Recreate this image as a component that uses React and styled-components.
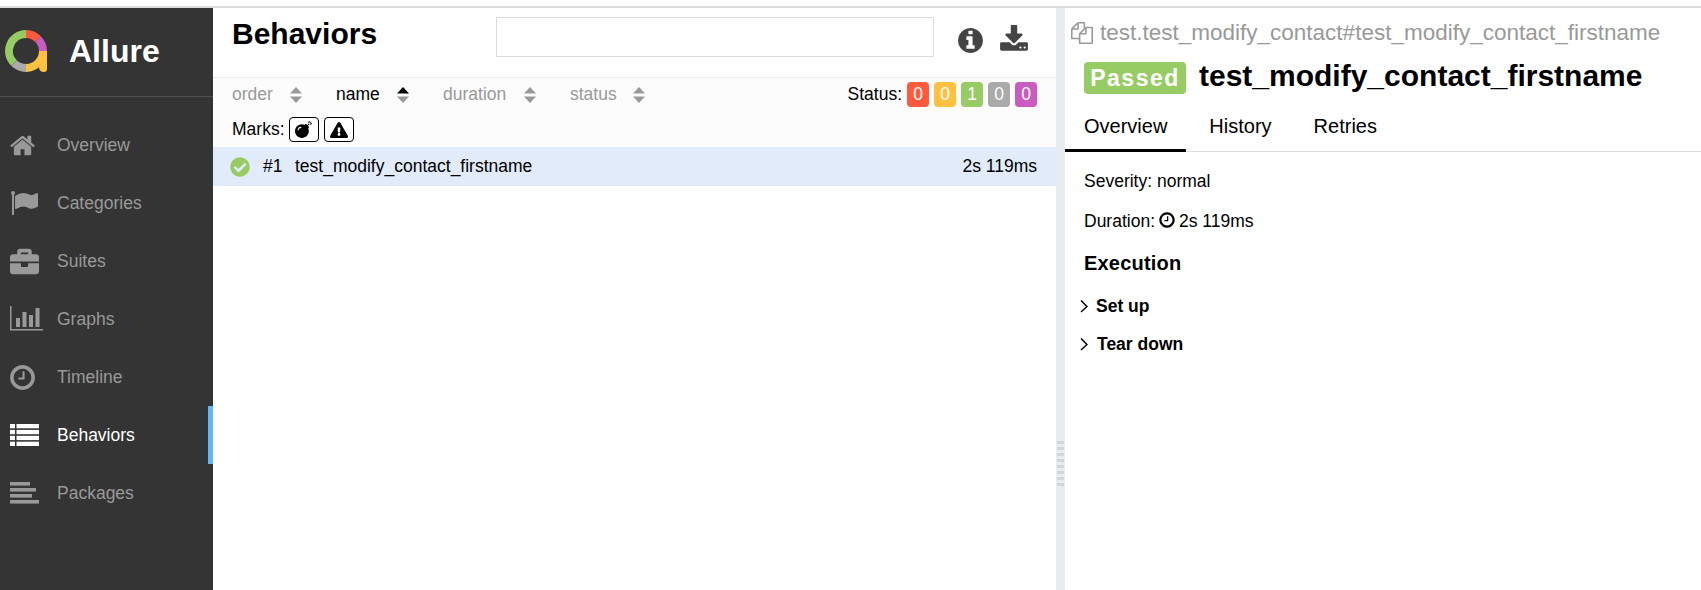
import React from 'react';
import styled, { createGlobalStyle } from 'styled-components';
import { FaBriefcase, FaBomb, FaExclamationTriangle, FaCheckCircle } from 'react-icons/fa';

const Global = createGlobalStyle`
  html, body { margin: 0; padding: 0; height: 100%; background: #fff; overflow: hidden; }
  body { font-family: "Liberation Sans", Arial, sans-serif; font-size: 17.5px; color: #000; }
  #root { height: 100%; }
`;

const Page = styled.div`
  width: 1701px; height: 590px; display: flex; flex-direction: column; overflow: hidden;
  padding-top: 6px; box-sizing: border-box;
`;
const TopLine = styled.div`height: 2px; background: #dcdcdc; flex: none;`;
const Body = styled.div`flex: 1; display: flex; min-height: 0;`;

const Side = styled.aside`width: 213px; flex: none; background: #343434; display: flex; flex-direction: column;`;
const Brand = styled.div`
  height: 89px; box-sizing: border-box; border-bottom: 1px solid #505050; display: flex; align-items: center;
  padding: 0 0 0 5px; gap: 20px; margin-bottom: 19px;
`;
const BrandName = styled.span`color: #fff; font-weight: 700; font-size: 32px; margin-bottom: 2px;`;
const NavItem = styled.div`
  height: 58px; display: flex; align-items: center; padding-left: 10px; box-sizing: border-box;
  color: ${p => (p.$active ? '#fff' : '#999')};
  border-right: ${p => (p.$active ? '5px solid #64b5f6' : '0')};
`;
const NavIcon = styled.span`width: 47px; flex: none; display: flex; align-items: center; svg { display: block; }`;
const Glyph = styled.svg`display: block; flex: none; fill: ${p => p.$c}; margin-left: ${p => p.$ml || 0}px;`;

const List = styled.main`width: 843px; flex: none; display: flex; flex-direction: column;`;
const ListHead = styled.header`
  height: 70px; flex: none; box-sizing: border-box; display: flex; align-items: flex-start;
  border-bottom: 1px solid #eee; padding-left: 19px;
`;
const Title = styled.h2`margin: 8px 0 0; font-size: 30px; line-height: 36px; font-weight: 700; width: 264px;`;
const Search = styled.div`width: 438px; height: 40px; margin-top: 9px; box-sizing: border-box; border: 1px solid #ddd; background: #fff;`;
const HeadIcon = styled.span`display: flex; margin-top: ${p => p.$mt}px; margin-left: ${p => p.$ml}px;`;

const Toolbar = styled.div`background: #fcfcfc; height: 69px; flex: none; box-sizing: border-box; padding: 4px 19px 0 19px;`;
const SortRow = styled.div`display: flex; align-items: center; height: 25px;`;
const SortItem = styled.span`
  display: flex; align-items: center; width: ${p => p.$w}px; flex: none;
  color: ${p => (p.$active ? '#000' : '#999')};
`;
const SortLabel = styled.span`width: ${p => p.$w}px; flex: none;`;
const StatusWrap = styled.div`margin-left: auto; display: flex; align-items: center; gap: 5px;`;
const Count = styled.span`
  width: 22px; height: 25px; border-radius: 4px; background: ${p => p.$c}; color: #fff; display: flex;
  align-items: center; justify-content: center; font-size: 17.5px;
`;
const MarksRow = styled.div`display: flex; align-items: center; gap: 5px; margin-top: 10px; height: 25px;`;
const MarksLabel = styled.span`margin-right: -1px;`;
const Mark = styled.span`
  width: 30px; height: 25px; box-sizing: border-box; border: 1px solid #000; border-radius: 4px;
  display: flex; align-items: center; justify-content: center; background: #fff;
`;
const Row = styled.div`
  height: 39px; flex: none; background: #e2ebfa; display: flex; align-items: center; padding: 0 19px 0 17px; box-sizing: border-box;
`;
const RowCheck = styled.span`display: flex; width: 33px; color: #97cc64; flex: none;`;
const RowOrder = styled.span`width: 32px; flex: none;`;
const RowTime = styled.span`margin-left: auto;`;

const Split = styled.div`width: 9px; flex: none; background: #e9edf1; display: flex; flex-direction: column; align-items: center; gap: 3px; padding-top: 433px; box-sizing: border-box;`;
const Grip = styled.i`display: block; width: 7px; height: 3px; background: #d3d7db;`;

const Detail = styled.section`flex: 1; min-width: 0; display: flex; flex-direction: column;`;
const PathLine = styled.div`
  display: flex; align-items: center; gap: 7px; color: #999; font-size: 22.5px; height: 32px; margin: 9px 0 0 6px;
`;
const TitleLine = styled.div`display: flex; align-items: center; gap: 13px; margin: 10px 0 0 19px; height: 34px;`;
const Passed = styled.span`
  background: #97cc64; color: #fff; font-weight: 700; font-size: 23px; letter-spacing: 1.5px; border-radius: 4px;
  width: 102px; height: 32px; display: flex; align-items: center; justify-content: center; box-sizing: border-box;
  margin-top: 4px;
`;
const TestName = styled.h2`margin: 0; font-size: 30px; font-weight: 700;`;
const Tabs = styled.div`display: flex; height: 45px; margin-top: 14px; border-bottom: 1px solid #ddd; box-sizing: border-box; flex: none;`;
const Tab = styled.div`
  padding: 0 ${p => p.$pr}px 4px ${p => p.$pl}px; font-size: 20px; display: flex; align-items: center; height: 45px; box-sizing: border-box;
  border-bottom: 3px solid ${p => (p.$active ? '#000' : 'transparent')};
`;
const Pane = styled.div`padding: 19px 0 0 19px; display: flex; flex-direction: column;`;
const Meta = styled.div`height: ${p => p.$h}px; display: flex; align-items: flex-start; gap: 3px; line-height: 20px;`;
const Exec = styled.h3`margin: 0 0 12px; font-size: 20px; font-weight: 700; letter-spacing: .2px; line-height: 24px;`;
const Step = styled.div`display: flex; align-items: center; font-weight: 700; height: 38px; margin-left: -4px;`;
const StepArrow = styled.span`display: flex; width: ${p => p.$w}px; flex: none;`;

const FA = ({ d, size, color = '#999', ml }) => (
  <Glyph width={size} height={size} viewBox="0 0 1792 1792" $c={color} $ml={ml}><path d={d} /></Glyph>
);
const HOME = 'M1408 992v480q0 26-19 45t-45 19h-384v-384h-256v384h-384q-26 0-45-19t-19-45v-480q0-1 .5-3t.5-3l575-474 575 474q1 2 1 6zm223-69l-62 74q-8 9-21 11h-3q-13 0-21-7l-692-577-692 577q-12 8-24 7-13-2-21-11l-62-74q-8-10-7-23.5t11-21.5l719-599q32-26 76-26t76 26l244 204v-195q0-14 9-23t23-9h192q14 0 23 9t9 23v408l219 182q10 8 11 21.5t-7 23.5z';
const FLAG = 'M320 256q0 72-64 110v1266q0 13-9.5 22.5t-22.5 9.5h-64q-13 0-22.5-9.5t-9.5-22.5v-1266q-64-38-64-110 0-53 37.5-90.5t90.5-37.5 90.5 37.5 37.5 90.5zm1472 64v763q0 25-12.5 38.5t-39.5 27.5q-215 116-369 116-61 0-123.5-22t-108.5-48-115.5-48-142.5-22q-192 0-464 146-17 9-33 9-26 0-45-19t-19-45v-742q0-32 31-55 21-14 79-43 236-120 421-120 107 0 200 29t219 88q38 19 88 19 54 0 117.5-21t110-47 88-47 54.5-21q26 0 45 19t19 45z';
const INFO = 'M1152 1376v-160q0-14-9-23t-23-9h-96v-512q0-14-9-23t-23-9h-320q-14 0-23 9t-9 23v160q0 14 9 23t23 9h96v320h-96q-14 0-23 9t-9 23v160q0 14 9 23t23 9h448q14 0 23-9t9-23zm-128-896v-160q0-14-9-23t-23-9h-192q-14 0-23 9t-9 23v160q0 14 9 23t23 9h192q14 0 23-9t9-23zm640 416q0 209-103 385.500t-279.500 279.500-385.500 103-385.500-103-279.500-279.500-103-385.500 103-385.500 279.500-279.500 385.500-103 385.500 103 279.500 279.500 103 385.500z';
const DOWNLOAD = 'M1344 1344q0-26-19-45t-45-19-45 19-19 45 19 45 45 19 45-19 19-45zm256 0q0-26-19-45t-45-19-45 19-19 45 19 45 45 19 45-19 19-45zm128-224v320q0 40-28 68t-68 28h-1472q-40 0-68-28t-28-68v-320q0-40 28-68t68-28h465l135 136q58 56 136 56t136-56l136-136h464q40 0 68 28t28 68zm-325-569q17 41-14 70l-448 448q-18 19-45 19t-45-19l-448-448q-31-29-14-70 17-39 59-39h256v-448q0-26 19-45t45-19h256q26 0 45 19t19 45v448h256q42 0 59 39z';
const COPY = 'M1696 384q40 0 68 28t28 68v1216q0 40-28 68t-68 28h-960q-40 0-68-28t-28-68v-288h-544q-40 0-68-28t-28-68v-672q0-40 20-88t48-76l408-408q28-28 76-48t88-20h416q40 0 68 28t28 68v328q68-40 128-40h416zm-544 213l-299 299h299v-299zm-640-384l-299 299h299v-299zm196 647l316-316v-416h-384v416q0 40-28 68t-68 28h-416v640h512v-256q0-40 20-88t48-76zm956 804v-1152h-384v416q0 40-28 68t-68 28h-416v640h896z';
const CLOCK = 'M1024 544v448q0 14-9 23t-23 9h-320q-14 0-23-9t-9-23v-64q0-14 9-23t23-9h224v-352q0-14 9-23t23-9h64q14 0 23 9t9 23zm416 352q0-148-73-273t-198-198-273-73-273 73-198 198-73 273 73 273 198 198 273 73 273-73 198-198 73-273zm224 0q0 209-103 385.500t-279.500 279.500-385.500 103-385.500-103-279.500-279.500-103-385.500 103-385.500 279.500-279.500 385.500-103 385.500 103 279.500 279.500 103 385.500z';

const Logo = () => (
  <svg width="44" height="44" viewBox="0 0 44 44" fill="none">
    <g strokeWidth="8">
      <path d="M9 33 A 17 17 0 0 1 21 4" stroke="#97cc64" />
      <path d="M21 4 A 17 17 0 0 1 33 9" stroke="#fd5a3e" />
      <path d="M33 9 A 17 17 0 0 1 38 21" stroke="#c85cbf" />
      <path d="M9 33 A 17 17 0 0 0 21 38" stroke="#aaa" />
      <path d="M21 38 A 17 17 0 0 0 38 21" stroke="#ffc13f" />
    </g>
    <path d="M34 21 h8 v18 q0 3 -3 3 q-5 0 -5 -5 z" fill="#ffc13f" />
  </svg>
);
const Bars = () => (
  <svg width="33" height="26" viewBox="0 0 33 26" fill="#999">
    <rect x="0" y="0" width="1.5" height="24" /><rect x="0" y="23" width="33" height="1.5" />
    <rect x="6" y="12" width="4" height="9" /><rect x="12.5" y="6" width="4" height="15" />
    <rect x="19" y="9" width="4" height="12" /><rect x="25.5" y="2" width="4" height="19" />
  </svg>
);
const ListIcon = () => (
  <svg width="29" height="22" viewBox="0 0 29 22" fill="#fff">
    {[0, 5.9, 11.8, 17.7].map(y => (
      <g key={y}><rect x="0" y={y} width="5" height="4.3" /><rect x="6.5" y={y} width="22.5" height="4.3" /></g>
    ))}
  </svg>
);
const Pack = () => (
  <svg width="29" height="22" viewBox="0 0 29 22" fill="#999">
    <rect y="0" width="20" height="3.6" /><rect y="6" width="26" height="3.6" />
    <rect y="12" width="22" height="3.6" /><rect y="18" width="29" height="3.6" />
  </svg>
);
const Sort = ({ up }) => (
  <svg width="12" height="16" viewBox="0 0 12 16">
    <path d="M6 0 L12 6.5 H0 Z" fill={up ? '#000' : '#999'} /><path d="M6 16 L12 9.5 H0 Z" fill="#999" />
  </svg>
);
const Chevron = () => (
  <svg width="8" height="14" viewBox="0 0 8 14" fill="none" stroke="#000" strokeWidth="1.5"><path d="M1 1.5 L7 7.5 L1 13" /></svg>
);

const nav = [
  ['Overview', <FA d={HOME} size={27} />],
  ['Categories', <FA d={FLAG} size={28} />],
  ['Suites', <FaBriefcase size={29} color="#999" />],
  ['Graphs', <Bars />],
  ['Timeline', <FA d={CLOCK} size={29} ml={-2} />],
  ['Behaviors', <ListIcon />, true],
  ['Packages', <Pack />],
];
const sorts = [['order', 58, 104], ['name', 61, 107, true], ['duration', 81, 127], ['status', 63, 120]];
const counts = [['0', '#fd5a3e'], ['0', '#ffc13f'], ['1', '#97cc64'], ['0', '#aaa'], ['0', '#c85cbf']];

export default function App() {
  return (
    <Page>
      <Global />
      <TopLine />
      <Body>
        <Side>
          <Brand><Logo /><BrandName>Allure</BrandName></Brand>
          {nav.map(([t, ic, a]) => (
            <NavItem key={t} $active={a}><NavIcon>{ic}</NavIcon>{t}</NavItem>
          ))}
        </Side>
        <List>
          <ListHead>
            <Title>Behaviors</Title>
            <Search />
            <HeadIcon $ml={22} $mt={18}><FA d={INFO} size={29} color="#444" /></HeadIcon>
            <HeadIcon $ml={14} $mt={17}><FA d={DOWNLOAD} size={30} color="#444" /></HeadIcon>
          </ListHead>
          <Toolbar>
            <SortRow>
              {sorts.map(([t, lw, w, a]) => (
                <SortItem key={t} $w={w} $active={a}><SortLabel $w={lw}>{t}</SortLabel><Sort up={a} /></SortItem>
              ))}
              <StatusWrap>
                <span>Status:</span>
                {counts.map(([n, c], i) => <Count key={i} $c={c}>{n}</Count>)}
              </StatusWrap>
            </SortRow>
            <MarksRow>
              <MarksLabel>Marks:</MarksLabel>
              <Mark><FaBomb size={17} color="#000" /></Mark>
              <Mark><FaExclamationTriangle size={18} color="#000" /></Mark>
            </MarksRow>
          </Toolbar>
          <Row>
            <RowCheck><FaCheckCircle size={20} /></RowCheck>
            <RowOrder>#1</RowOrder>
            test_modify_contact_firstname
            <RowTime>2s 119ms</RowTime>
          </Row>
        </List>
        <Split>{Array.from({ length: 8 }).map((_, i) => <Grip key={i} />)}</Split>
        <Detail>
          <PathLine><FA d={COPY} size={22} />test.test_modify_contact#test_modify_contact_firstname</PathLine>
          <TitleLine><Passed>Passed</Passed><TestName>test_modify_contact_firstname</TestName></TitleLine>
          <Tabs>
            <Tab $active $pl={19} $pr={19}>Overview</Tab>
            <Tab $pl={23} $pr={19}>History</Tab>
            <Tab $pl={23} $pr={19}>Retries</Tab>
          </Tabs>
          <Pane>
            <Meta $h={40}>Severity: normal</Meta>
            <Meta $h={40}>Duration: <FA d={CLOCK} size={18} color="#000" /> 2s 119ms</Meta>
            <Exec>Execution</Exec>
            <Step><StepArrow $w={16}><Chevron /></StepArrow>Set up</Step>
            <Step><StepArrow $w={17}><Chevron /></StepArrow>Tear down</Step>
          </Pane>
        </Detail>
      </Body>
    </Page>
  );
}
